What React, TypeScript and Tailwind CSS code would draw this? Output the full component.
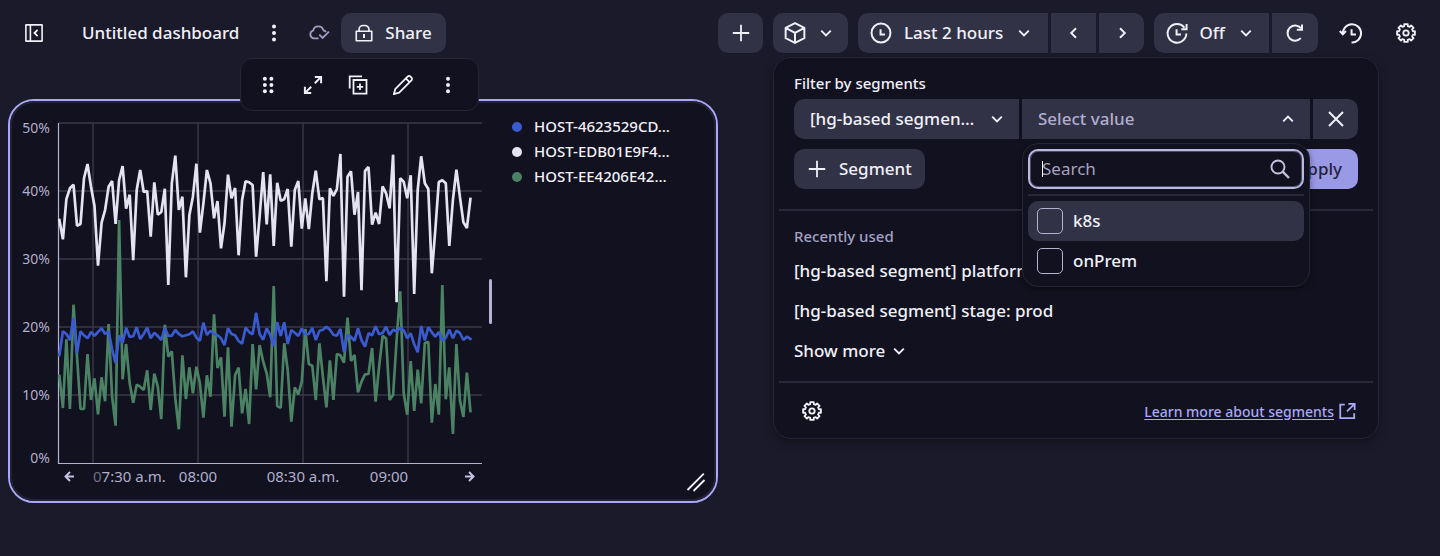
import type { ReactNode } from "react";

type IconProps = { children: ReactNode; className?: string };

function Icon({ children, className = "size-5" }: IconProps) {
  return (
    <svg
      viewBox="0 0 20 20"
      className={`shrink-0 overflow-visible ${className}`}
      fill="none"
      stroke="currentColor"
      strokeWidth="1.8"
      aria-hidden="true"
    >
      {children}
    </svg>
  );
}

const ChevronDown = () => (
  <Icon className="size-4">
    <path d="M4 7l6 6 6-6" strokeWidth="2.4" />
  </Icon>
);
const ChevronUp = () => (
  <Icon className="size-4">
    <path d="M4 13l6-6 6 6" strokeWidth="2.4" />
  </Icon>
);
const Plus = () => (
  <Icon>
    <path d="M10 1.8v16.4M1.8 10h16.4" />
  </Icon>
);
const More = () => (
  <Icon>
    <g fill="currentColor" stroke="none">
      <circle cx="10" cy="3.5" r="2" />
      <circle cx="10" cy="10" r="2" />
      <circle cx="10" cy="16.5" r="2" />
    </g>
  </Icon>
);

/* Eight teeth: each contributes two inner and two outer corners. */
const GEAR_POINTS = Array.from({ length: 8 }, (_, i) =>
  [
    [7.1, -14],
    [9.1, -11],
    [9.1, 11],
    [7.1, 14],
  ].map(([r, offset]) => {
    const a = ((i * 45 + offset) * Math.PI) / 180;
    return `${(10 + r * Math.sin(a)).toFixed(2)},${(10 - r * Math.cos(a)).toFixed(2)}`;
  }),
)
  .flat()
  .join(" ");

const Gear = () => (
  <Icon>
    <polygon points={GEAR_POINTS} strokeLinejoin="round" />
    <circle cx="10" cy="10" r="2.7" />
  </Icon>
);

const STEP = 3.513;

type Series = { name: string; dot: string; color: string; base: number; values: number[] };

/* Values are thirds of a unit below the base line of each series. */
const SERIES: Series[] = [
  {
    name: "HOST-EDB01E9F4…",
    dot: "bg-[#e3e3f2]",
    color: "#e3e3f2",
    base: -33,
    values: [
      390, 448, 327, 295, 284, 407, 402, 265, 222, 290, 348, 527, 398, 360, 290, 273, 402, 270, 228, 356, 314, 511,
      300, 240, 306, 303, 440, 277, 374, 366, 296, 585, 280, 197, 360, 320, 562, 375, 320, 221, 428, 340, 240, 280,
      385, 333, 475, 400, 254, 325, 294, 496, 330, 274, 277, 285, 500, 380, 246, 403, 253, 468, 278, 332, 328, 297,
      470, 300, 273, 416, 325, 417, 310, 242, 328, 324, 574, 295, 318, 297, 192, 620, 260, 244, 374, 306, 601, 243,
      231, 404, 368, 402, 289, 310, 355, 194, 637, 265, 275, 325, 256, 612, 300, 199, 280, 297, 550, 420, 276, 271,
      280, 468, 330, 239, 320, 397, 414, 327,
    ],
  },
  {
    name: "HOST-EE4206E42…",
    dot: "bg-[#4a8263]",
    color: "#4a8263",
    base: 167,
    values: [
      258, 354, 148, 357, 44, 200, 357, 357, 192, 330, 265, 373, 262, 334, 102, 320, 407, -210, 268, 162, 280, 338,
      284, 290, 300, 241, 360, 251, 290, 387, 104, 200, 184, 325, 418, 196, 327, 232, 310, 230, 280, 383, 256, 320,
      73, 234, 202, 380, 172, 410, 255, 233, 370, 297, 402, 162, 298, 165, 215, 250, 322, -12, 348, 353, 160, 240,
      395, 292, 313, 275, 117, 222, 227, 330, 160, 260, 352, 211, 330, 192, 196, 218, 83, 213, 195, 307, 275, 253,
      252, 174, 335, 230, 138, 145, 330, 315, 150, 4, 310, 374, 213, 363, 239, 340, 160, 155, 398, 282, 374, -15,
      328, 232, 432, 162, 330, 381, 248, 363,
    ],
  },
  {
    name: "HOST-4623529CD…",
    dot: "bg-[#3a5bd0]",
    color: "#3a5bd0",
    base: 167,
    values: [
      195, 124, 132, 150, 84, 190, 124, 136, 145, 126, 137, 126, 115, 132, 124, 178, 219, 136, 158, 113, 141, 139,
      112, 147, 132, 113, 145, 128, 138, 150, 113, 138, 137, 120, 132, 139, 136, 133, 124, 143, 152, 98, 135, 122,
      132, 136, 145, 165, 115, 132, 136, 153, 161, 113, 126, 133, 68, 132, 149, 115, 135, 168, 97, 138, 97, 162,
      120, 128, 138, 116, 133, 132, 114, 150, 122, 119, 110, 119, 134, 137, 117, 186, 135, 141, 152, 115, 150, 170,
      130, 136, 109, 133, 129, 110, 135, 119, 124, 114, 121, 145, 130, 163, 187, 108, 151, 112, 127, 140, 126, 152,
      143, 119, 145, 122, 129, 150, 140, 147,
    ],
  },
];

const LEGEND = [SERIES[2], SERIES[0], SERIES[1]];

const toPoints = (s: Series) =>
  s.values.map((v, i) => `${(0.4 + i * STEP).toFixed(1)},${(s.base + v / 3).toFixed(1)}`).join(" ");

const Y_LABELS = [
  { text: "50%", y: 10 },
  { text: "40%", y: 73 },
  { text: "30%", y: 141 },
  { text: "20%", y: 209 },
  { text: "10%", y: 277 },
  { text: "0%", y: 340 },
];

function Chart() {
  return (
    <svg viewBox="0 0 462 380" className="block w-full" role="img" aria-label="Usage by host">
      <g transform="translate(39 12)">
        <g stroke="#393849" strokeWidth="1.4">
          {[0, 68, 136, 204, 272].map((y) => (
            <path key={y} d={`M0 ${y}H423`} />
          ))}
          {[34, 139, 244, 349].map((x) => (
            <path key={x} d={`M${x} 0V340`} />
          ))}
        </g>
        <path d="M-.5 0V340.5H423" fill="none" stroke="#b4b2cf" strokeWidth="1.2" />
        {SERIES.map((s) => (
          <polyline
            key={s.name}
            points={toPoints(s)}
            fill="none"
            stroke={s.color}
            strokeWidth="2.7"
            strokeLinejoin="bevel"
            strokeLinecap="square"
          />
        ))}
        <g fill="#b0aecb" fontSize="14">
          {Y_LABELS.map((l) => (
            <text key={l.text} x="-9" y={l.y} textAnchor="end">
              {l.text}
            </text>
          ))}
        </g>
        <g fill="#b0aecb" fontSize="15">
          <text x="34" y="359">
            <tspan fillOpacity="0.6">0</tspan>7:30 a.m.
          </text>
          <text x="139" y="359" textAnchor="middle">
            08:00
          </text>
          <text x="244" y="359" textAnchor="middle">
            08:30 a.m.
          </text>
          <text x="330" y="359" textAnchor="middle">
            09:00
          </text>
        </g>
        <g fill="none" stroke="#c4c2e0" strokeWidth="2">
          <path d="M15 353.5H6.5M11 349l-4.500 4.500 4.500 4.500" />
          <path d="M406 353.5h8.500M410 349l4.500 4.500-4.500 4.500" />
        </g>
      </g>
    </svg>
  );
}

const btn = "flex h-10 shrink-0 items-center justify-center bg-[#323246]";
const iconBtn = "flex h-10 w-[45px] shrink-0 items-center justify-center";
const select = "min-w-0 appearance-none truncate bg-transparent outline-none";

function Header() {
  return (
    <header className="flex items-center pt-[13px] pr-3 pl-[11px] text-[17px] leading-6 font-medium">
      <button className={iconBtn} aria-label="Toggle sidebar">
        <Icon className="size-[18px]">
          <path d="M1 1h18v18H1zM6 1v18" strokeLinejoin="round" />
          <path d="M14 6.500L10.500 10l3.500 3.500" strokeWidth="2" />
        </Icon>
      </button>
      <h1 className="ml-[26px] whitespace-nowrap">Untitled dashboard</h1>
      <button className={`${iconBtn} ml-3`} aria-label="More actions">
        <More />
      </button>
      <button className={`${iconBtn} text-[#a09ec0]`} aria-label="Saved">
        <Icon>
          <path d="M9.500 15.300H4.800a4 4 0 0 1-.6-7.800A5.200 5.200 0 0 1 14.400 7.500" />
          <path d="M14.200 7.500c1.500 0 2.300.6 2.800 1.400M10.300 11.700l3.300 3.300 6.400-6.400" />
        </Icon>
      </button>
      <button className={`${btn} gap-3 rounded-[10px] px-[14px]`}>
        <Icon className="size-[18px]">
          <path d="M1.400 8h17.200v10.600H1.400zM4.500 8V6.200a4.600 4.600 0 0 1 4.600-4.600h1.800a4.600 4.600 0 0 1 4.600 4.600V8" strokeLinejoin="round" />
          <path d="M10 11v4.500" strokeWidth="2.200" />
        </Icon>
        Share
      </button>

      <div className="ml-auto flex gap-[10px]">
        <button className={`${btn} w-[45px] rounded-[10px]`} aria-label="Add tile">
          <Plus />
        </button>
        <button className={`${btn} w-[75px] gap-3 rounded-[10px] pr-1`} aria-label="Segments" aria-expanded="true">
          <Icon className="size-[22px]">
            <path
              d="M10 1l8.500 4.300v9.400L10 19l-8.500-4.300V5.300zM1.500 5.300L10 9.900l8.500-4.600M10 9.900V19"
              strokeLinejoin="round"
            />
          </Icon>
          <ChevronDown />
        </button>
        <div className="flex gap-[3px]">
          <label className={`${btn} w-[190px] gap-3 rounded-l-[10px] pr-1`}>
            <Icon className="size-[22px]">
              <circle cx="10" cy="10" r="8.6" />
              <path d="M9.600 6.500v4.900h4" />
            </Icon>
            <select className={select} aria-label="Timeframe">
              <option>Last 2 hours</option>
            </select>
            <ChevronDown />
          </label>
          <button className={`${btn} w-[45px]`} aria-label="Previous timeframe">
            <Icon className="size-4">
              <path d="M12.500 4L6.500 10l6 6" strokeWidth="2.4" />
            </Icon>
          </button>
          <button className={`${btn} w-[45px] rounded-r-[10px]`} aria-label="Next timeframe">
            <Icon className="size-4">
              <path d="M7.500 4l6 6-6 6" strokeWidth="2.4" />
            </Icon>
          </button>
        </div>
        <div className="flex gap-[3px]">
          <label className={`${btn} w-[115px] gap-3 rounded-l-[10px] pr-1`}>
            <Icon className="size-[22px]">
              <path d="M16.800 5.200A8.500 8.500 0 1 0 18.500 10.500M18.700 1.800v4.800h-4.800" />
              <path d="M9.600 6.500v4.900h4" />
            </Icon>
            <select className={select} aria-label="Auto-refresh">
              <option>Off</option>
            </select>
            <ChevronDown />
          </label>
          <button className={`${btn} w-[46px] rounded-r-[10px]`} aria-label="Refresh">
            <Icon>
              <path d="M15.800 15.200A7.600 7.600 0 1 1 16 5.200M17 1.500v5.200h-5.200" strokeWidth="2" />
            </Icon>
          </button>
        </div>
        <button className={iconBtn} aria-label="Version history">
          <Icon className="size-[22px]">
            <path d="M2.600 11A8.300 8.300 0 1 1 10.500 18.600M-.2 8.200l2.800 2.900 2.800-2.900" />
            <path d="M10.500 6.500v4.900h4" />
          </Icon>
        </button>
        <button className={iconBtn} aria-label="Settings">
          <Gear />
        </button>
      </div>
    </header>
  );
}

function TileToolbar() {
  return (
    <div
      role="toolbar"
      aria-label="Tile actions"
      className="absolute -top-[43px] left-[230px] flex h-[53px] w-[239px] items-center justify-center rounded-xl border border-[#262536] bg-[#12111f] pr-[3px]"
    >
      <button className={iconBtn} aria-label="Move">
        <Icon className="size-[18px]">
          <g fill="currentColor" stroke="none">
            {[3, 10, 17].map((y) => (
              <g key={y}>
                <circle cx="6.5" cy={y} r="2.2" />
                <circle cx="13.8" cy={y} r="2.2" />
              </g>
            ))}
          </g>
        </Icon>
      </button>
      <button className={iconBtn} aria-label="Expand">
        <Icon className="size-[18px]">
          <path d="M12 1h7v7M19 1l-7 7M8 19H1v-7M1 19l7-7" strokeWidth="2.2" />
        </Icon>
      </button>
      <button className={iconBtn} aria-label="Duplicate">
        <Icon>
          <path d="M5.500 5h13v13.700h-13zM1.700 13.500V1.300H14M12 8.600v6.400M8.800 11.800h6.400" />
        </Icon>
      </button>
      <button className={iconBtn} aria-label="Edit">
        <Icon>
          <path
            d="M.8 19.200l1.600-5.400L14.600 1.600a2 2 0 0 1 2.900 0l.9.900a2 2 0 0 1 0 2.900L6.200 17.600zM12.800 3.400l3.800 3.800"
            strokeLinejoin="round"
          />
        </Icon>
      </button>
      <button className={iconBtn} aria-label="More tile actions">
        <Icon className="size-[18px]">
          <g fill="currentColor" stroke="none">
            <circle cx="10" cy="3" r="2.2" />
            <circle cx="10" cy="10" r="2.2" />
            <circle cx="10" cy="17" r="2.2" />
          </g>
        </Icon>
      </button>
    </div>
  );
}

function Tile() {
  return (
    <section className="relative rounded-[26px] border-2 border-[#a9a8f6] bg-[#12111f]">
      <div className="flex rounded-3xl border-2 border-[#232233] pt-2 pr-6 pb-2 pl-2">
        <div className="min-w-0 flex-1">
          <Chart />
        </div>
        <div className="ml-[7px] h-[45px] w-[3px] self-center rounded-full bg-[#b4b2d6]" />
        <ul className="mt-[3px] ml-5 w-[178px] text-[15px] leading-[25px] font-medium">
          {LEGEND.map((s) => (
            <li key={s.name} className="flex items-center gap-3 whitespace-nowrap">
              <span className={`size-[10px] rounded-full ${s.dot}`} />
              {s.name}
            </li>
          ))}
        </ul>
      </div>
      <Icon className="absolute right-[10px] bottom-[9px] size-5">
        <path d="M1.500 18L17.800 1.700M7.500 19L18.500 8" />
      </Icon>
      <TileToolbar />
    </section>
  );
}

function ValueList() {
  return (
    <div className="absolute inset-x-0 top-11 z-10 rounded-[16px] border border-[#262536] bg-[#12111f] p-[5px] shadow-[0_2px_6px_rgba(0,0,0,0.4)]">
      <label className="relative flex h-10 items-center rounded-[10px] border-2 border-[#bbb9e2] px-3 ring-1 ring-[#4b4a68] ring-inset">
        <span className="absolute left-3 h-4 w-px bg-white" />
        <input
          className="w-full min-w-0 bg-transparent font-normal outline-none placeholder:text-[#a3a1c2]"
          placeholder="Search"
          aria-label="Search"
        />
        <Icon className="size-5 text-[#c4c2e0]">
          <circle cx="8" cy="8" r="6.5" strokeWidth="1.9" />
          <path d="M12.700 12.700l6.300 6.300" strokeWidth="2.4" />
        </Icon>
      </label>
      <hr className="mt-[5px] mb-[5px] border-t-2 border-[#29283a]" />
      {["k8s", "onPrem"].map((name, i) => (
        <label
          key={name}
          className={`flex h-10 items-center gap-[10px] rounded-[10px] px-[9px] ${i === 0 ? "bg-[#323246]" : ""}`}
        >
          <input type="checkbox" className="size-[26px] appearance-none rounded-[5px] border border-[#b4b2d0]" />
          {name}
        </label>
      ))}
    </div>
  );
}

function SegmentsPanel() {
  return (
    <section className="absolute top-[57px] right-[61px] w-[606px] rounded-[18px] border border-[#262536] bg-[#12111f] px-[5px] pt-[15px] pb-[7px] text-[17px] leading-6 font-medium shadow-[0_4px_10px_rgba(0,0,0,0.35)]">
      <div className="px-[15px]">
        <h2 className="mb-[5px] text-[15px] leading-[21px]">Filter by segments</h2>
        <div className="flex gap-[3px]">
          <label className={`${btn} w-[225px] gap-3 rounded-l-[10px] pr-[14px] pl-4`}>
            <select className={`${select} flex-1`} aria-label="Segment">
              <option>[hg-based segmen…</option>
            </select>
            <ChevronDown />
          </label>
          <div className="relative flex-1">
            <button
              className={`${btn} w-full pr-[14px] pl-4 text-[#b0aed0]`}
              aria-haspopup="listbox"
              aria-expanded="true"
            >
              <span className="flex-1 text-left">Select value</span>
              <span className="text-[#f0f0f8]">
                <ChevronUp />
              </span>
            </button>
            <ValueList />
          </div>
          <button className={`${btn} w-[45px] rounded-r-[10px]`} aria-label="Remove segment">
            <Icon>
              <path d="M3 3l14 14M17 3L3 17" strokeWidth="2" />
            </Icon>
          </button>
        </div>
        <div className="mt-[10px] flex justify-between">
          <button className={`${btn} gap-3 rounded-[10px] px-[13px]`}>
            <Plus />
            Segment
          </button>
          <button className="h-10 rounded-[10px] bg-[#9a99e6] px-4 text-[#24233c]">Apply</button>
        </div>
      </div>
      <hr className="mt-5 border-t-2 border-[#29283a]" />
      <div className="px-[15px] pt-[15px] pb-[10px]">
        <h3 className="text-[15px] leading-[21px] text-[#a3a1c2]">Recently used</h3>
        <button className="mt-1 flex h-10 items-center">[hg-based segment] platform</button>
        <button className="flex h-10 items-center">[hg-based segment] stage: prod</button>
        <button className="flex h-10 items-center gap-[6px]">
          Show more
          <ChevronDown />
        </button>
      </div>
      <hr className="border-t-2 border-[#29283a]" />
      <div className="flex items-center justify-between pt-2 pr-[17px] pl-[15px]">
        <button className="flex h-10 w-9 items-center justify-center" aria-label="Segment settings">
          <Gear />
        </button>
        <a href="#segments" className="flex items-center gap-1 text-[14px] leading-[21px] font-medium text-[#a9a8f6]">
          <span className="underline underline-offset-2">Learn more about segments</span>
          <Icon className="size-[18px]">
            <path d="M7.500 3H2.500v15H18v-5.500M11.500 2h7v7M18.500 2L10 10.500" strokeWidth="2" />
          </Icon>
        </a>
      </div>
    </section>
  );
}

export default function App() {
  return (
    <div className="relative min-h-screen bg-[#1b1a2b] font-['Noto_Sans','Liberation_Sans',sans-serif] text-[#f0f0f8]">
      <Header />
      <main className="mt-[46px] grid grid-cols-2 gap-1 px-2 pb-12">
        <Tile />
      </main>
      <SegmentsPanel />
    </div>
  );
}
